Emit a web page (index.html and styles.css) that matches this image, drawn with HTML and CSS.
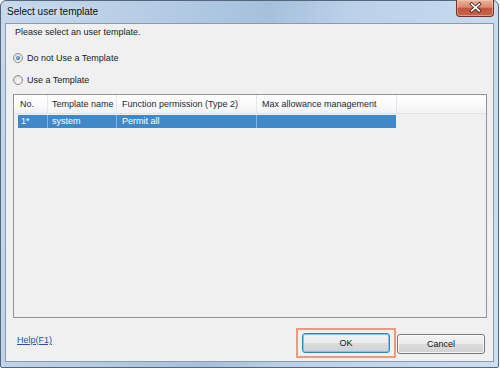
FILE: index.html
```html
<!DOCTYPE html>
<html>
  <head>
    <title>Select user template</title>
    <meta name="viewport" content="width=device-width, initial-scale=1.0">
    <link rel="stylesheet" href="styles.css">
  </head>
  <body>
    <div class="window">
      <div class="titlebar">
        <div class="titletext">Select user template</div>
        <div class="closebtn">
          <svg width="38" height="16" viewBox="0 0 38 16">
            <path d="M15.5 4 L23.5 11 M23.5 4 L15.5 11" stroke="#4a2a22" stroke-width="3.6" stroke-linecap="square"/>
            <path d="M15.5 4 L23.5 11 M23.5 4 L15.5 11" stroke="#fff" stroke-width="1.8" stroke-linecap="square"/>
          </svg>
        </div>
      </div>
      <div class="panel">
        <div class="intro">Please select an user template.</div>
        <div class="options">
          <div class="optrow"><span class="radio checked"></span>Do not Use a Template</div>
          <div class="optrow"><span class="radio"></span>Use a Template</div>
        </div>
        <div class="listview">
          <div class="listhead">
            <div class="hcell h1">No.</div>
            <div class="hcell h2">Template name</div>
            <div class="hcell h3">Function permission (Type 2)</div>
            <div class="hcell h4">Max allowance management</div>
          </div>
          <div class="listrow selected">
            <div class="rcell r1">1*</div>
            <div class="rcell r2">system</div>
            <div class="rcell r3">Permit all</div>
            <div class="rcell r4"></div>
          </div>
        </div>
        <div class="footer">
          <a class="helplink">Help(F1)</a>
          <div class="okframe"><button class="btn focus">OK</button></div>
          <button class="btn">Cancel</button>
        </div>
      </div>
    </div>
  </body>
</html>
```

FILE: styles.css
```css
*{box-sizing:border-box;margin:0;padding:0;}
body{background:#fff;font-family:"Liberation Sans",Arial,sans-serif;font-size:9px;color:#1a1a1a;}
.window{width:499px;height:368px;border:1px solid #56677c;border-radius:6px 6px 2px 2px;padding:0 4px 5px 4px;
  display:flex;flex-direction:column;
  background:linear-gradient(100deg,#c6d9ed 0%,#b3cbe4 30%,#a6c0dc 48%,#bad1e9 62%,#cddff1 100%);}
.titlebar{height:22px;display:flex;align-items:flex-start;}
.titletext{font-size:10px;line-height:22px;padding-left:2px;color:#0c0c0c;text-shadow:0 0 6px #e8f0f8;}
.closebtn{margin-left:auto;margin-top:-1px;width:38px;height:17px;border:1px solid #6a3326;border-top:none;
  border-radius:0 0 4px 4px;display:flex;
  background:linear-gradient(to bottom,#e9b29a 0%,#d98b6c 45%,#c1553b 52%,#c8634a 100%);
  box-shadow:inset 0 0 0 1px rgba(255,220,200,0.45);}
.panel{flex:1;background:#f0f0f0;border:1px solid #8a9bb0;display:flex;flex-direction:column;}
.intro{margin:3px 0 0 9px;line-height:11px;height:11px;}
.options{margin-top:14px;padding-left:7px;display:flex;flex-direction:column;gap:10px;}
.optrow{height:12px;line-height:12px;display:flex;align-items:center;}
.radio{width:10px;height:10px;border-radius:50%;border:1px solid #8b8d90;margin-right:4px;position:relative;
  background:radial-gradient(circle at 60% 65%,#fafafa 0%,#e4e4e4 60%,#cfcfcf 100%);}
.radio.checked:after{content:"";position:absolute;left:2px;top:2px;width:4px;height:4px;border-radius:50%;
  background:radial-gradient(circle at 40% 40%,#a8d0f2 0%,#3a76b0 55%,#1c4470 100%);}
.listview{margin:8px 6px 0 7px;height:224px;border:1px solid #8e949c;background:#f0f0f0;}
.listhead{height:19px;display:flex;background:linear-gradient(to bottom,#ffffff 0%,#fbfbfc 50%,#f1f2f4 100%);
  border-bottom:1px solid #dfe3e8;}
.hcell{height:18px;line-height:18px;padding-left:5px;border-right:1px solid #e2e5ea;color:#1e2630;white-space:nowrap;}
.h1{width:34px;padding-left:6px;}
.h2{width:69px;padding-left:4px;}
.h3{width:140px;}
.h4{width:140px;}
.listrow{display:flex;margin:1px 0 0 4px;height:13px;}
.listrow.selected{color:#fff;}
.rcell{height:13px;line-height:13px;padding-left:5px;background:#3f88ca;border-right:1px solid #7fb2e0;white-space:nowrap;}
.r1{width:30px;padding-left:3px;}
.r2{width:69px;padding-left:4px;}
.r3{width:140px;}
.r4{width:139px;border-right:none;}
.footer{display:flex;align-items:flex-start;padding:10px 8px 0 11px;}
.helplink{margin-top:7px;line-height:11px;color:#2f4fa6;text-decoration:underline;cursor:pointer;}
.okframe{margin-left:auto;width:100px;height:30px;border:2px solid #ec9a7c;display:flex;align-items:center;justify-content:center;}
.btn{width:88px;height:20px;font-family:"Liberation Sans",Arial,sans-serif;font-size:9px;color:#111;
  border:1px solid #767a80;border-radius:3px;
  background:linear-gradient(to bottom,#f3f3f3 0%,#ececec 48%,#dcdcdc 52%,#d2d2d2 100%);
  box-shadow:inset 0 0 0 1px rgba(255,255,255,0.7);}
.btn.focus{border-color:#3c7fb1;box-shadow:inset 0 0 0 1px #7ec4ee;}
.footer > .btn{margin:6px 0 0 1px;}
```
